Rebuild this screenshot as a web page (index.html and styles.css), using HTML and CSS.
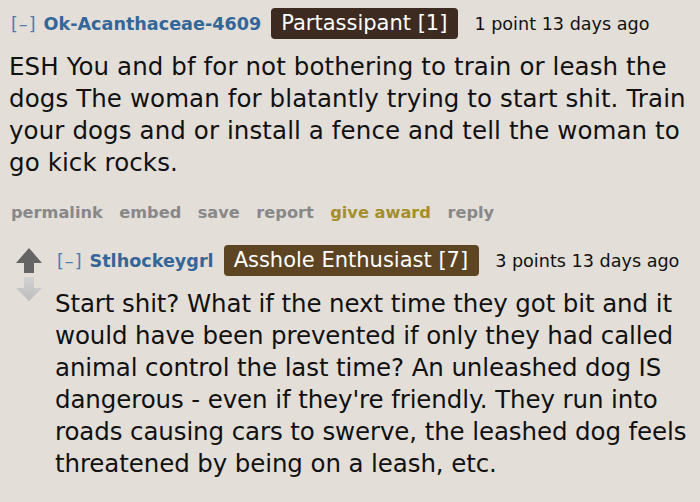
FILE: index.html
```html
<!DOCTYPE html>
<html>
<head>
<meta charset="utf-8">
<link rel="stylesheet" href="styles.css">
</head>
<body>
<div class="page">
  <div class="comment">
    <div class="meta">
      <span class="toggle">[–]</span>
      <span class="author">Ok-Acanthaceae-4609</span>
      <span class="flair flair-dark">Partassipant [1]</span>
      <span class="score">1 point 13 days ago</span>
    </div>
    <p class="body">ESH You and bf for not bothering to train or leash the<br>dogs The woman for blatantly trying to start shit. Train<br>your dogs and or install a fence and tell the woman to<br>go kick rocks.</p>
    <div class="actions">
      <span>permalink</span>
      <span>embed</span>
      <span>save</span>
      <span>report</span>
      <span class="award">give award</span>
      <span>reply</span>
    </div>
  </div>
  <div class="reply">
    <div class="votes">
      <svg class="arrow" width="26" height="25" viewBox="0 0 26 25"><path d="M13 0 L26 15 L18 15 L18 25 L8 25 L8 15 L0 15 Z" fill="#646464"/></svg>
      <svg class="arrow" width="26" height="24" viewBox="0 0 26 24"><defs><linearGradient id="dg" x1="0" y1="0" x2="0" y2="1"><stop offset="0" stop-color="#d2d2d2"/><stop offset="1" stop-color="#bdbdbd"/></linearGradient></defs><path d="M13 24 L26 11 L18 11 L18 0 L8 0 L8 11 L0 11 Z" fill="url(#dg)"/></svg>
    </div>
    <div class="reply-main">
      <div class="meta">
        <span class="toggle">[–]</span>
        <span class="author">Stlhockeygrl</span>
        <span class="flair flair-brown">Asshole Enthusiast [7]</span>
        <span class="score">3 points 13 days ago</span>
      </div>
      <p class="body body2">Start shit? What if the next time they got bit and it<br>would have been prevented if only they had called<br>animal control the last time? An unleashed dog IS<br>dangerous - even if they're friendly. They run into<br>roads causing cars to swerve, the leashed dog feels<br>threatened by being on a leash, etc.</p>
    </div>
  </div>
</div>
</body>
</html>
```
FILE: styles.css
```css
html, body {
  margin: 0;
  padding: 0;
  background: #e3ded8;
}
body {
  font-family: "DejaVu Sans", Verdana, sans-serif;
  color: #111;
  width: 700px;
  height: 502px;
  overflow: hidden;
}
.page {
  padding: 8px 0 0 9px;
}
.meta {
  display: flex;
  align-items: center;
  height: 31px;
  font-size: 17.6px;
  padding-left: 2px;
  white-space: nowrap;
}
.toggle {
  color: #4f7cae;
  letter-spacing: 1px;
  margin-right: 7px;
}
.author {
  color: #336699;
  font-weight: bold;
  margin-right: 10px;
}
.flair {
  color: #fff;
  font-size: 21px;
  border-radius: 4px;
  padding: 0 11px 0 10px;
  height: 31px;
  line-height: 31px;
  margin-right: 16px;
}
.flair-dark { background: #3d2a21; }
.flair-brown { background: #5d4423; }
.score { color: #111; }
.body {
  margin: 12px 0 0 0;
  font-size: 24.5px;
  letter-spacing: 0.1px;
  line-height: 32px;
  white-space: nowrap;
}
.actions {
  display: flex;
  gap: 16.5px;
  margin-top: 24px;
  padding-left: 2px;
  height: 20px;
  line-height: 20px;
  font-size: 16.2px;
  font-weight: bold;
  color: #888;
}
.award { color: #a58f2b; }
.reply {
  display: flex;
  margin-top: 22px;
  padding-left: 7px;
}
.votes {
  display: flex;
  flex-direction: column;
  gap: 4px;
  padding-top: 3px;
  width: 39px;
  flex: none;
}
.arrow { display: block; }
.reply-main {
  flex: 1;
}
.body2 {
  margin-top: 12px;
  letter-spacing: -0.1px;
}
```
